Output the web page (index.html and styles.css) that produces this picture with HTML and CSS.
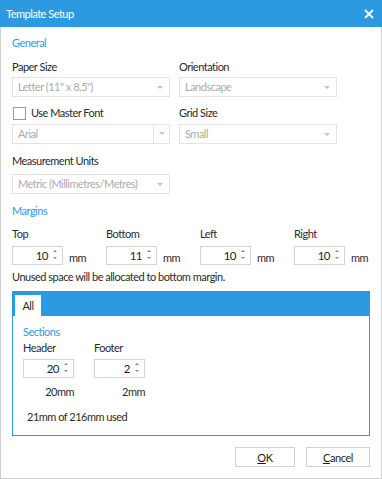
FILE: index.html
```html
<!doctype html>
<html lang="en">
    <head>
        <meta charset="UTF-8" />
        <title>Template Setup</title>
        <link rel="stylesheet" href="styles.css">
    </head>
    <body>
        <div class="window">
            <div class="titlebar">
                <span class="title">Template Setup</span>
                <svg class="close" width="10" height="10" viewBox="0 0 10 10">
                    <path d="M1 1 L9 9 M9 1 L1 9" stroke="#fff" stroke-width="1.8" />
                </svg>
            </div>

            <div class="content">
                <div class="heading">General</div>

                <div class="cols">
                    <div class="col">
                        <div class="label">Paper Size</div>
                        <div class="select">Letter (11" x 8.5")<span class="arrow"></span></div>
                    </div>
                    <div class="col">
                        <div class="label">Orientation</div>
                        <div class="select">Landscape<span class="arrow"></span></div>
                    </div>
                </div>

                <div class="cols">
                    <div class="col">
                        <label class="label check"><span class="box"></span>Use Master Font</label>
                        <div class="select select-combo">Arial<span class="btn"><span class="arrow"></span></span></div>
                    </div>
                    <div class="col">
                        <div class="label">Grid Size</div>
                        <div class="select select-low">Small<span class="arrow"></span></div>
                    </div>
                </div>

                <div class="label label-units">Measurement Units</div>
                <div class="select select-units">Metric (Millimetres/Metres)<span class="arrow"></span></div>

                <div class="heading heading-margins">Margins</div>

                <div class="margins">
                    <div class="margin">
                        <div class="label">Top</div>
                        <div class="spin-row">
                            <div class="spin">10<span class="carets"><i class="up"></i><i class="down"></i></span></div>
                            <span class="unit">mm</span>
                        </div>
                    </div>
                    <div class="margin">
                        <div class="label">Bottom</div>
                        <div class="spin-row">
                            <div class="spin">11<span class="carets"><i class="up"></i><i class="down"></i></span></div>
                            <span class="unit">mm</span>
                        </div>
                    </div>
                    <div class="margin">
                        <div class="label">Left</div>
                        <div class="spin-row">
                            <div class="spin">10<span class="carets"><i class="up"></i><i class="down"></i></span></div>
                            <span class="unit">mm</span>
                        </div>
                    </div>
                    <div class="margin">
                        <div class="label">Right</div>
                        <div class="spin-row">
                            <div class="spin">10<span class="carets"><i class="up"></i><i class="down"></i></span></div>
                            <span class="unit">mm</span>
                        </div>
                    </div>
                </div>

                <div class="note">Unused space will be allocated to bottom margin.</div>

                <div class="tabs">
                    <div class="tab-strip">
                        <div class="tab">All</div>
                    </div>
                    <div class="tab-panel">
                        <div class="heading heading-sections">Sections</div>
                        <div class="sections">
                            <div class="section">
                                <div class="label">Header</div>
                                <div class="spin">20<span class="carets"><i class="up"></i><i class="down"></i></span></div>
                                <div class="size">20mm</div>
                            </div>
                            <div class="section">
                                <div class="label">Footer</div>
                                <div class="spin">2<span class="carets"><i class="up"></i><i class="down"></i></span></div>
                                <div class="size">2mm</div>
                            </div>
                        </div>
                        <div class="used">21mm of 216mm used</div>
                    </div>
                </div>

                <div class="buttons">
                    <button class="button button-ok"><u>O</u>K</button>
                    <button class="button button-cancel"><u>C</u>ancel</button>
                </div>
            </div>
        </div>
    </body>
</html>
```

FILE: styles.css
```css
html,
body {
    margin: 0;
    background: #fff;
}

body {
    font-family: Lato, "Open Sans", sans-serif;
    font-size: 11px;
    line-height: 16px;
    letter-spacing: -0.5px;
    color: #2b2b2b;
}

.window {
    width: 382px;
    height: 479px;
    box-sizing: border-box;
    border: 1px solid #cfcfcf;
    border-top: none;
    background: #fff;
}

.titlebar {
    height: 27px;
    margin: 0 -1px;
    background-color: #2b9ae0;
    color: #fff;
    display: flex;
    align-items: center;
    justify-content: space-between;
    padding: 0 8px 0 6px;
}

.close {
    display: block;
}

.content {
    padding: 0 11px;
}

.heading {
    color: #2b9ae0;
    margin-top: 8px;
}

.label {
    display: block;
    margin-top: 8px;
}

.cols {
    display: flex;
    gap: 9px;
}

.col {
    width: 158px;
}

.check {
    display: flex;
    align-items: center;
    gap: 5px;
}

.box {
    width: 11px;
    height: 11px;
    border: 1px solid #9a9a9a;
    margin-left: 1px;
    background: #fff;
}

/* disabled dropdowns */
.select {
    position: relative;
    box-sizing: border-box;
    height: 20px;
    margin-top: 2px;
    border: 1px solid #e3e3e3;
    color: #ababab;
    padding: 1px 0 0 5px;
    line-height: 16px;
    white-space: nowrap;
}

.cols + .cols .select {
    margin-top: 3px;
}

.arrow {
    position: absolute;
    right: 6px;
    top: 8px;
    width: 0;
    height: 0;
    border-left: 3px solid transparent;
    border-right: 3px solid transparent;
    border-top: 3px solid #c4c4c4;
}

.select-combo .btn {
    position: absolute;
    right: 0;
    top: 0;
    bottom: 0;
    width: 15px;
    border-left: 1px solid #e3e3e3;
}

.select-combo .btn .arrow {
    right: 4px;
    top: 7px;
}

.label-units {
    margin-top: 9px;
}

.select-units {
    width: 158px;
    margin-top: 5px;
}

.heading-margins {
    margin-top: 9px;
}

.margins {
    display: grid;
    grid-template-columns: repeat(4, 94px);
}

.margin .label {
    margin-top: 7px;
}

.spin-row {
    display: flex;
    align-items: flex-end;
    gap: 6px;
    margin-top: 4px;
}

.spin {
    position: relative;
    box-sizing: border-box;
    width: 51px;
    height: 19px;
    border: 1px solid #d4d4d4;
    text-align: right;
    padding-right: 14px;
    line-height: 17px;
    color: #1e1e1e;
    font-size: 11.5px;
}

.carets {
    position: absolute;
    right: 5px;
    top: 3px;
    display: flex;
    flex-direction: column;
    gap: 5px;
}

.carets i {
    display: block;
    width: 0;
    height: 0;
    border-left: 2px solid transparent;
    border-right: 2px solid transparent;
}

.carets .up {
    border-bottom: 2px solid #888;
}

.carets .down {
    border-top: 2px solid #888;
}

.unit {
    line-height: 16px;
    margin-bottom: -1px;
}

.note {
    margin-top: 4px;
}

.tabs {
    margin-top: 6px;
}

.tab-strip {
    height: 25px;
    box-sizing: border-box;
    background-color: #2b9ae0;
    padding: 4px 0 0 3px;
}

.tab {
    width: 26px;
    height: 21px;
    background: #fff;
    text-align: center;
    line-height: 21px;
}

.tab-panel {
    border: 1px solid #2b9ae0;
    border-top: none;
    padding: 0 10px 10px;
}

.heading-sections {
    margin-top: 0;
    padding-top: 8px;
}

.sections {
    display: flex;
    gap: 20px;
}

.section .label {
    margin-top: 0;
}

.section .spin {
    margin-top: 3px;
}

.size {
    width: 51px;
    text-align: right;
    margin-top: 6px;
}

.used {
    margin-top: 9px;
    padding-left: 4px;
}

.buttons {
    display: flex;
    justify-content: flex-end;
    gap: 11px;
    margin-top: 11px;
}

.button {
    box-sizing: border-box;
    height: 20px;
    border: 1px solid #d0d0d0;
    background: #fff;
    font-family: inherit;
    font-size: 11px;
    letter-spacing: -0.4px;
    color: #1e1e1e;
    padding: 0;
}

.button-ok {
    width: 60px;
}

.button-cancel {
    width: 64px;
}
```
